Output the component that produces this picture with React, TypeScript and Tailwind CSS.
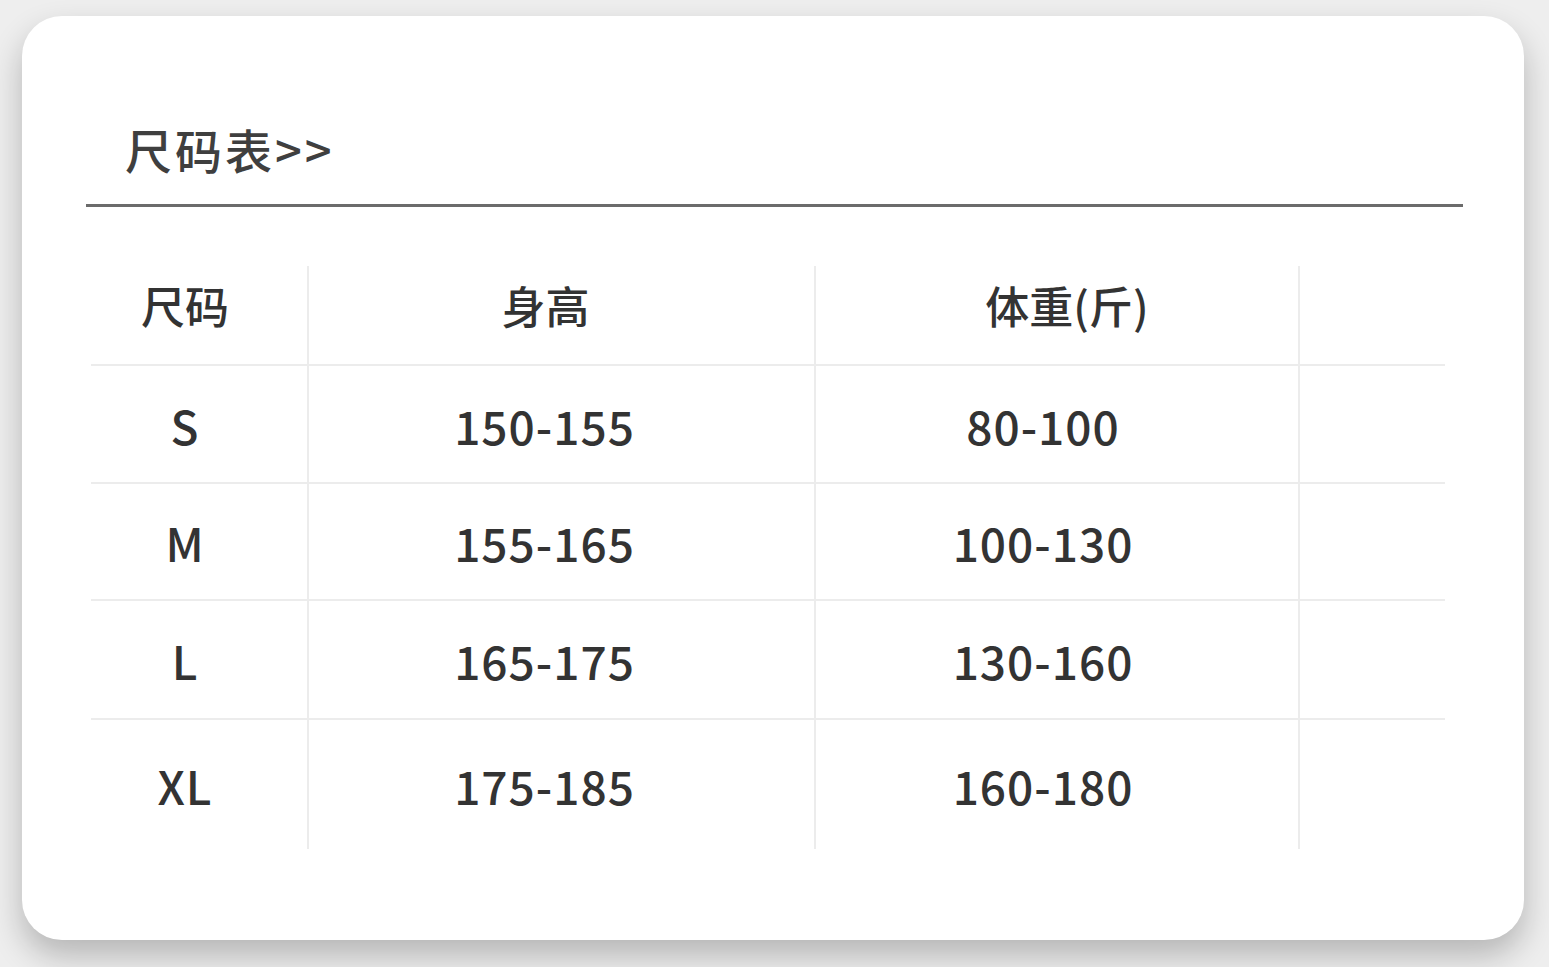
const rows = [
  { size: "S", height: "150-155", weight: "80-100" },
  { size: "M", height: "155-165", weight: "100-130" },
  { size: "L", height: "165-175", weight: "130-160" },
  { size: "XL", height: "175-185", weight: "160-180" },
];

const rowHeights = ["h-[118px]", "h-[117px]", "h-[119px]", "h-[129px]"];

export default function App() {
  return (
    <div
      className="min-h-[967px] w-full bg-[#eeeeee] pl-[22px] pr-[25px] pt-[16px]"
      style={{ fontFamily: '"Noto Sans CJK SC", "Noto Sans", sans-serif' }}
    >
      <div className="h-[924px] w-[1502px] rounded-[40px] bg-white pl-[64px] pr-[61px] pt-[100px] shadow-[0_16px_32px_rgba(0,0,0,0.24)]">
        {/* title */}
        <div className="border-b-[3px] border-[#6b6b6b] pb-[22px] pl-[39px]">
          <h1 className="text-[47px] leading-[66px] font-medium tracking-[3px] text-[#3f3f3f]">尺码表&gt;&gt;</h1>
        </div>

        {/* size table */}
        <div className="ml-[5px] mt-[59px] w-[1354px] text-[#333333]">
          <div className="grid h-[100px] grid-cols-[218px_507px_484px_145px] border-b-2 border-[#ececec] text-[44px] font-medium">
            <div className="flex items-center justify-center border-r-2 border-[#ececec] pr-[28px] pb-[20px]">尺码</div>
            <div className="flex items-center justify-center border-r-2 border-[#ececec] pr-[32px] pb-[20px]">身高</div>
            <div className="flex items-center justify-center border-r-2 border-[#ececec] pl-[20px] pb-[20px]">体重(斤)</div>
            <div></div>
          </div>
          {rows.map((r, i) => (
            <div
              key={r.size}
              className={`grid grid-cols-[218px_507px_484px_145px] text-[46px] font-medium tracking-[1px] ${rowHeights[i]} ${
                i < rows.length - 1 ? "border-b-2 border-[#ececec]" : ""
              }`}
            >
              <div className="flex items-center justify-center border-r-2 border-[#ececec] pr-[28px] pt-[2px]">{r.size}</div>
              <div className="flex items-center justify-center border-r-2 border-[#ececec] pr-[34px] pt-[2px]">{r.height}</div>
              <div className="flex items-center justify-center border-r-2 border-[#ececec] pr-[28px] pt-[2px]">{r.weight}</div>
              <div></div>
            </div>
          ))}
        </div>
      </div>
    </div>
  );
}
